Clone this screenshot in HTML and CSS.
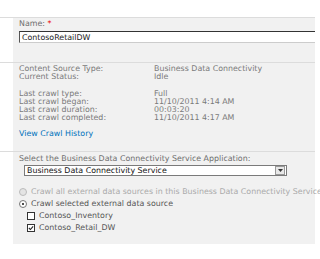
FILE: index.html
```html
<!DOCTYPE html>
<html>
<head>
<meta charset="utf-8">
<link rel="stylesheet" href="styles.css">
</head>
<body>
<div class="page">
  <div class="section sec-name">
    <div class="gutter"></div>
    <div class="panel">
      <div class="label">Name: <span class="req">*</span></div>
      <div class="textbox">ContosoRetailDW</div>
    </div>
  </div>
  <div class="section sec-info">
    <div class="gutter"></div>
    <div class="panel">
      <div class="grid">
        <span>Content Source Type:</span><span>Business Data Connectivity</span>
        <span>Current Status:</span><span>Idle</span>
      </div>
      <div class="grid gap">
        <span>Last crawl type:</span><span>Full</span>
        <span>Last crawl began:</span><span>11/10/2011 4:14 AM</span>
        <span>Last crawl duration:</span><span>00:03:20</span>
        <span>Last crawl completed:</span><span>11/10/2011 4:17 AM</span>
      </div>
      <a class="link">View Crawl History</a>
    </div>
  </div>
  <div class="section sec-bdc">
    <div class="gutter"></div>
    <div class="panel">
      <div class="label">Select the Business Data Connectivity Service Application:</div>
      <div class="select">
        <span class="select-text">Business Data Connectivity Service</span>
        <span class="select-btn"><svg width="5" height="3" viewBox="0 0 5 3"><path d="M0 0h5L2.5 3z" fill="#333"/></svg></span>
      </div>
      <div class="opt disabled"><span class="radio"></span><span class="nowrap">Crawl all external data sources in this Business Data Connectivity Service</span></div>
      <div class="opt"><span class="radio on"></span><span>Crawl selected external data source</span></div>
      <div class="opt sub"><span class="check"></span><span>Contoso_Inventory</span></div>
      <div class="opt sub"><span class="check on"><svg width="7" height="7" viewBox="0 0 7 7"><path d="M1 3.5l1.8 1.8L6 1.5" stroke="#222" stroke-width="1.3" fill="none"/></svg></span><span>Contoso_Retail_DW</span></div>
    </div>
  </div>
</div>
</body>
</html>
```

FILE: styles.css
```css
html, body {
  margin: 0;
  padding: 0;
  background: #fff;
}
body {
  font-family: "DejaVu Sans", Verdana, sans-serif;
  font-size: 7.9px;
  line-height: 8px;
  color: #7a7a7a;
  overflow: hidden;
  width: 320px;
  height: 259px;
}
.page {
  padding-top: 17px;
  width: 315px;
}
.section {
  display: flex;
  border-top: 1px solid #dcdcdc;
}
.gutter {
  width: 13px;
  flex: none;
  background: #fff;
}
.panel {
  flex: 1;
  background: #f1f1f1;
  padding-left: 6px;
  min-width: 0;
}
.sec-name .panel {
  padding-top: 2px;
  height: 44px;
  box-sizing: border-box;
}
.label {
  color: #6e6e6e;
}
.req {
  color: #e00;
}
.textbox {
  margin-top: 3px;
  height: 12px;
  box-sizing: border-box;
  background: #fff;
  border-top: 1px solid #333;
  border-left: 1px solid #555;
  border-bottom: 1px solid #ccc;
  padding: 1px 2px 0;
  color: #222;
  line-height: 9px;
}
.sec-info .panel {
  padding-top: 2px;
  height: 88px;
  box-sizing: border-box;
}
.grid {
  display: grid;
  grid-template-columns: 135px 1fr;
}
.grid.gap {
  margin-top: 9px;
}
.link {
  display: block;
  margin-top: 8px;
  color: #0072bc;
}
.sec-bdc .panel {
  padding-top: 3px;
  height: 92px;
  box-sizing: border-box;
}
.sec-bdc .label {
  white-space: nowrap;
}
.select {
  margin: 2px 0 0 5px;
  width: 263px;
  height: 11px;
  box-sizing: border-box;
  border: 1px solid #7a7a7a;
  background: #fff;
  display: flex;
  align-items: center;
  color: #111;
}
.select-text {
  flex: 1;
  padding-left: 2px;
}
.select-btn {
  width: 8px;
  height: 7px;
  margin-right: 1px;
  border: 1px solid #999;
  background: #e8e8e8;
  display: flex;
  align-items: center;
  justify-content: center;
}
.opt {
  display: flex;
  align-items: center;
  color: #555;
  margin-top: 4px;
  white-space: nowrap;
}
.sec-bdc .select + .opt {
  margin-top: 12px;
}
.opt.disabled {
  color: #aaa;
}
.opt.sub {
  padding-left: 8px;
}
.radio {
  width: 6px;
  height: 6px;
  border-radius: 50%;
  border: 1px solid #777;
  background: #fff;
  margin-right: 4px;
  flex: none;
  position: relative;
}
.disabled .radio {
  border-color: #bbb;
  background: #e4e4e4;
}
.radio.on::after {
  content: "";
  position: absolute;
  left: 2px;
  top: 2px;
  width: 2px;
  height: 2px;
  background: #111;
  border-radius: 50%;
}
.check {
  width: 6px;
  height: 6px;
  border: 1px solid #333;
  background: #fff;
  margin-right: 4px;
  flex: none;
  display: flex;
  align-items: center;
  justify-content: center;
}
.check svg {
  width: 6px;
  height: 6px;
}
.nowrap {
  white-space: nowrap;
}
```
